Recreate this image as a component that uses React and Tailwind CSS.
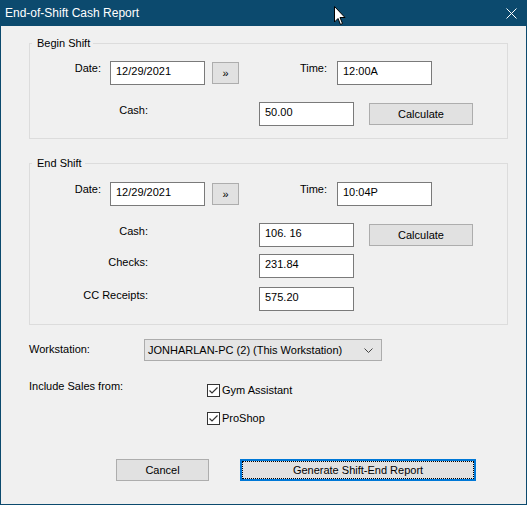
import React from 'react';

function TextBox({ value, className = '' }) {
  return (
    <div
      className={`h-[24px] w-[95px] shrink-0 border border-[#7a7a7a] bg-white pl-[5px] pt-[3px] text-[11px] leading-[13px] whitespace-pre ${className}`}
    >
      {value}
    </div>
  );
}

function Button({ children, className = '' }) {
  return (
    <button
      type="button"
      className={`h-[22px] shrink-0 border border-[#adadad] bg-[#e1e1e1] text-[11px] leading-[13px] text-black ${className}`}
    >
      {children}
    </button>
  );
}

function Label({ children, className = '' }) {
  return (
    <div className={`shrink-0 text-right text-[11px] leading-[13px] ${className}`}>{children}</div>
  );
}

function DateRow({ date, time }) {
  return (
    <div className="flex items-start">
      <Label className="mt-[1px] w-[71px]">Date:</Label>
      <TextBox value={date} className="ml-[9px] w-[94px]" />
      <Button className="ml-[7px] mt-[1px] h-[21px] w-[27px] text-[9px] text-[#4a3a2a]">»</Button>
      <Label className="mt-[1px] w-[88px]">Time:</Label>
      <TextBox value={time} className="ml-[10px]" />
    </div>
  );
}

function MoneyRow({ label, value, calc, className = '' }) {
  return (
    <div className={`flex items-start ${className}`}>
      <Label className="mt-[2px] w-[118px]">{label}</Label>
      <TextBox value={value} className="ml-[111px]" />
      {calc && <Button className="ml-[15px] mt-[1px] w-[104px]">Calculate</Button>}
    </div>
  );
}

function Check({ label, className = '' }) {
  return (
    <label className={`flex items-start ${className}`}>
      <svg width="13" height="13" viewBox="0 0 13 13" className="shrink-0">
        <rect x="0.5" y="0.5" width="12" height="12" fill="#fff" stroke="#333" />
        <path d="M2.5 6.5 L5 9 L10.5 3.5" fill="none" stroke="#333" strokeWidth="1.2" />
      </svg>
      <span className="ml-[2px] text-[11px] leading-[13px]">{label}</span>
    </label>
  );
}

export default function App() {
  return (
    <div className="w-[527px] h-[505px] overflow-hidden bg-[#f0f0f0] border-x border-b border-[#0c4a6e] font-['Liberation_Sans',Arial,sans-serif] text-black">
      {/* Title bar */}
      <div className="relative flex h-[26px] items-center bg-[#0c4a6e] pl-[4px] text-white">
        <span className="text-[12px] leading-[16px]">End-of-Shift Cash Report</span>
        <svg width="11" height="11" viewBox="0 0 11 11" className="ml-auto mr-[9px]">
          <path d="M0.5 0.5 L10.5 10.5 M10.5 0.5 L0.5 10.5" stroke="#fff" strokeWidth="1" />
        </svg>
        {/* mouse pointer captured in the screenshot */}
        <svg width="13" height="20" viewBox="0 0 13 20" className="absolute left-[333px] top-[6px]">
          <path d="M0.5 0.5 L0.5 16 L4 12.5 L6.5 18.5 L8.5 17.5 L6 11.5 L11 11.5 Z" fill="#fff" stroke="#000" strokeWidth="1" />
        </svg>
      </div>

      <div className="pl-[28px]">
        {/* Begin Shift */}
        <fieldset className="mt-[11px] w-[479px] border border-[#dcdcdc] pt-[11px] pb-[12px]">
          <legend className="ml-[2px] pl-[5px] pr-[3px] text-[11px] leading-[13px]">Begin Shift</legend>
          <DateRow date="12/29/2021" time="12:00A" />
          <MoneyRow label="Cash:" value="50.00" calc className="mt-[17px]" />
        </fieldset>

        {/* End Shift */}
        <fieldset className="mt-[18px] w-[479px] border border-[#dcdcdc] pt-[12px] pb-[13px]">
          <legend className="ml-[2px] pl-[5px] pr-[3px] text-[11px] leading-[13px]">End Shift</legend>
          <DateRow date="12/29/2021" time="10:04P" />
          <MoneyRow label="Cash:" value="106. 16" calc className="mt-[17px]" />
          <MoneyRow label="Checks:" value="231.84" className="mt-[7px]" />
          <MoneyRow label="CC Receipts:" value="575.20" className="mt-[9px]" />
        </fieldset>

        {/* Workstation */}
        <div className="mt-[14px] flex items-start">
          <div className="mt-[4px] w-[115px] text-[11px] leading-[13px]">Workstation:</div>
          <div className="flex h-[22px] w-[238px] items-center border border-[#acacac] bg-[#e5e5e5] pl-[3px] pr-[8px] text-[11px] leading-[13px]">
            <span>JONHARLAN-PC (2) (This Workstation)</span>
            <svg width="9" height="5" viewBox="0 0 9 5" className="ml-auto">
              <path d="M0.5 0.5 L4.5 4.5 L8.5 0.5" fill="none" stroke="#444" strokeWidth="1" />
            </svg>
          </div>
        </div>

        {/* Include Sales from */}
        <div className="mt-[19px] flex items-start">
          <div className="w-[178px] text-[11px] leading-[13px]">Include Sales from:</div>
          <div className="mt-[4px] flex flex-col">
            <Check label="Gym Assistant" />
            <Check label="ProShop" className="mt-[15px]" />
          </div>
        </div>

        {/* Buttons */}
        <div className="mt-[34px] flex items-start pl-[87px]">
          <Button className="w-[93px]">Cancel</Button>
          <button
            type="button"
            className="ml-[31px] h-[22px] w-[236px] border-2 border-[#0078d7] bg-[#e1e1e1] text-[11px] leading-[13px] outline outline-1 outline-dotted outline-black outline-offset-[-3px]"
          >
            Generate Shift-End Report
          </button>
        </div>
      </div>
    </div>
  );
}
